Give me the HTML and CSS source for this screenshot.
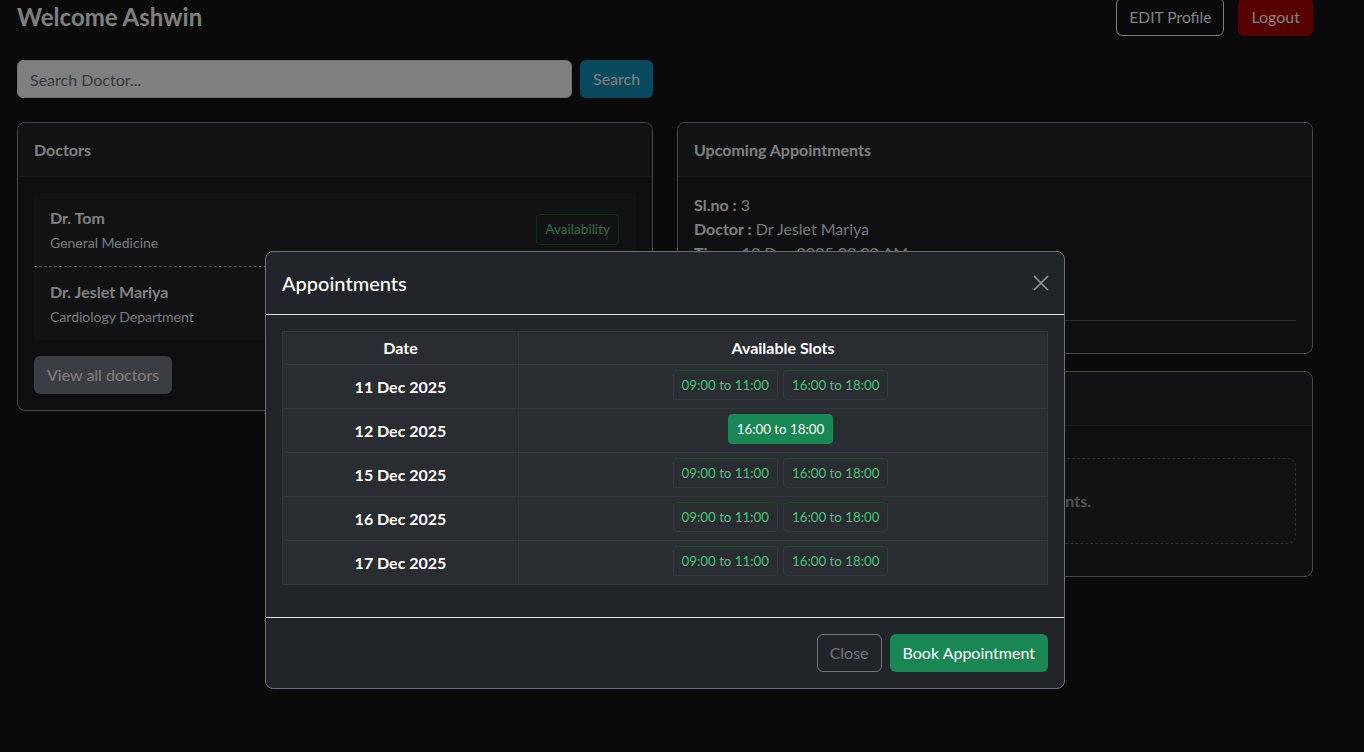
FILE: index.html
```html
<!DOCTYPE html>
<html lang="en">
<head>
    <meta charset="UTF-8">
    <meta name="viewport" content="width=device-width, initial-scale=1.0">
    <title>Patient Dashboard</title>
    <link rel="stylesheet" href="styles.css">
</head>
<body>
    <div class="page">
        <div class="topbar">
            <h3 class="welcome">Welcome Ashwin</h3>
            <div class="top-actions">
                <button class="btn btn-outline-light">EDIT Profile</button>
                <button class="btn btn-logout">Logout</button>
            </div>
        </div>

        <form class="search-row">
            <input type="text" class="search-input" placeholder="Search Doctor...">
            <button type="button" class="btn btn-search">Search</button>
        </form>

        <div class="columns">
            <div class="card">
                <div class="card-header">Doctors</div>
                <div class="card-body">
                    <ul class="doctor-list">
                        <li class="doctor-item">
                            <div>
                                <div class="doctor-name">Dr. Tom</div>
                                <div class="doctor-dept">General Medicine</div>
                            </div>
                            <button class="btn btn-sm btn-avail">Availability</button>
                        </li>
                        <li class="doctor-item">
                            <div>
                                <div class="doctor-name">Dr. Jeslet Mariya</div>
                                <div class="doctor-dept">Cardiology Department</div>
                            </div>
                            <button class="btn btn-sm btn-avail">Availability</button>
                        </li>
                    </ul>
                    <button class="btn btn-secondary">View all doctors</button>
                </div>
            </div>

            <div class="right-col">
                <div class="card">
                    <div class="card-header">Upcoming Appointments</div>
                    <div class="card-body">
                        <div class="appt">
                            <strong>Sl.no :</strong> 3<br>
                            <strong>Doctor :</strong> Dr Jeslet Mariya<br>
                            <strong>Time :</strong> 12 Dec 2025 09:00 AM<br>
                            <strong>Status :</strong> Booked
                        </div>
                        <hr>
                    </div>
                </div>

                <div class="card">
                    <div class="card-header">Past Appointments</div>
                    <div class="card-body">
                        <div class="empty-box">No previous appointments.</div>
                    </div>
                </div>
            </div>
        </div>
    </div>

    <div class="backdrop"></div>

    <div class="modal">
        <div class="modal-header">
            <h5 class="modal-title">Appointments</h5>
            <button class="btn-close" aria-label="Close">
                <svg width="16" height="16" viewBox="0 0 16 16">
                    <path d="M1 1L15 15M15 1L1 15" stroke="#8d9094" stroke-width="1.7" fill="none"/>
                </svg>
            </button>
        </div>
        <div class="modal-body">
            <table class="slots-table">
                <thead>
                    <tr>
                        <th class="date-col">Date</th>
                        <th>Available Slots</th>
                    </tr>
                </thead>
                <tbody>
                    <tr>
                        <td class="date">11 Dec 2025</td>
                        <td class="slots"><div class="slot-list">
                            <button class="btn btn-slot">09:00 to 11:00</button>
                            <button class="btn btn-slot">16:00 to 18:00</button>
                        </div></td>
                    </tr>
                    <tr>
                        <td class="date">12 Dec 2025</td>
                        <td class="slots"><div class="slot-list">
                            <button class="btn btn-slot active">16:00 to 18:00</button>
                        </div></td>
                    </tr>
                    <tr>
                        <td class="date">15 Dec 2025</td>
                        <td class="slots"><div class="slot-list">
                            <button class="btn btn-slot">09:00 to 11:00</button>
                            <button class="btn btn-slot">16:00 to 18:00</button>
                        </div></td>
                    </tr>
                    <tr>
                        <td class="date">16 Dec 2025</td>
                        <td class="slots"><div class="slot-list">
                            <button class="btn btn-slot">09:00 to 11:00</button>
                            <button class="btn btn-slot">16:00 to 18:00</button>
                        </div></td>
                    </tr>
                    <tr>
                        <td class="date">17 Dec 2025</td>
                        <td class="slots"><div class="slot-list">
                            <button class="btn btn-slot">09:00 to 11:00</button>
                            <button class="btn btn-slot">16:00 to 18:00</button>
                        </div></td>
                    </tr>
                </tbody>
            </table>
        </div>
        <div class="modal-footer">
            <button class="btn btn-outline-secondary">Close</button>
            <button class="btn btn-success">Book Appointment</button>
        </div>
    </div>
</body>
</html>
```

FILE: styles.css
```css
* { box-sizing: border-box; }
body {
    margin: 0;
    background: #141414;
    color: #fff;
    font-family: "Segoe UI", Lato, "Noto Sans", sans-serif;
    font-size: 16px;
    line-height: 1.5;
    overflow: hidden;
}
.page {
    width: 1296px;
    margin-left: 17px;
}
.topbar {
    display: flex;
    justify-content: space-between;
    align-items: center;
    margin-top: -2px;
    height: 38px;
}
.welcome {
    margin: 0;
    font-size: 24px;
    font-weight: 700;
    line-height: 1.2;
}
.top-actions {
    display: flex;
    gap: 14px;
}
.btn {
    font-family: inherit;
    font-size: 16px;
    line-height: 24px;
    padding: 6px 12px;
    border: 1px solid transparent;
    border-radius: 6px;
    color: #fff;
    background: none;
    cursor: pointer;
}
.btn-sm {
    font-size: 13.6px;
    line-height: 21px;
    padding: 4px 8px;
    border-radius: 4px;
}
.btn-outline-light { border-color: #f8f9fa; font-size: 15.6px; }
.btn-logout { background: #ad0000; }
.btn-search { background: #1393bb; }
.btn-secondary { background: #747b83; }
.btn-avail { color: #58d88a; border-color: #245a38; }
.btn-outline-secondary { color: #6c757d; border-color: #6c757d; }
.btn-success { background: #198754; }

.search-row {
    display: flex;
    gap: 8px;
    margin: 24px 0 0;
}
.search-input {
    width: 555px;
    height: 38px;
    padding: 6px 12px;
    font-family: inherit;
    font-size: 16px;
    background: #fff;
    border: 1px solid #dee2e6;
    border-radius: 6px;
}
.search-input::placeholder { color: #6c757d; }

.columns {
    display: grid;
    grid-template-columns: 1fr 1fr;
    gap: 24px;
    align-items: start;
    margin-top: 24px;
}
.right-col {
    display: flex;
    flex-direction: column;
    gap: 17px;
}
.card {
    background: #1c1e21;
    border: 1px solid #8a8f94;
    border-radius: 8px;
    overflow: hidden;
}
.card-header {
    padding: 16px;
    line-height: 21px;
    font-weight: 700;
    background: #222428;
    border-bottom: 1px solid #34373a;
}
.card-body { padding: 16px; }

.doctor-list {
    list-style: none;
    margin: 0 0 16px;
    padding: 0;
    background: #222428;
}
.doctor-item {
    display: flex;
    justify-content: space-between;
    align-items: center;
    padding: 13px 17px 13px 16px;
}
.doctor-item + .doctor-item { border-top: 1px dashed #9a9da0; }
.doctor-name {
    font-weight: 700;
    line-height: 24px;
    margin-bottom: 2px;
}
.doctor-dept {
    font-size: 14px;
    line-height: 21px;
    color: #eceef0;
}

.appt {
    padding-bottom: 15px;
    line-height: 24px;
    color: #e6e8ea;
}
.appt strong { color: #fff; }
hr {
    border: 0;
    border-top: 1px solid #55585c;
    margin: 16px 0;
}
.empty-box {
    margin: 16px 0;
    padding: 30px;
    line-height: 24px;
    text-align: center;
    font-weight: 700;
    color: #a0a4a9;
    background: #222428;
    border: 1px dashed #56595e;
    border-radius: 8px;
}

.backdrop {
    position: fixed;
    inset: 0;
    background: rgba(0, 0, 0, 0.5);
}
.modal {
    position: fixed;
    top: 251px;
    left: 265px;
    width: 800px;
    background: #212529;
    border: 1px solid #6c7075;
    border-radius: 8px;
}
.modal-header {
    display: flex;
    justify-content: space-between;
    align-items: center;
    padding: 16px;
    border-bottom: 1px solid #dee2e6;
}
.modal-title {
    margin: 0;
    font-size: 20px;
    font-weight: 500;
    line-height: 30px;
}
.btn-close {
    display: flex;
    padding: 0;
    margin-right: -1px;
    border: 0;
    background: none;
    cursor: pointer;
}
.modal-body { padding: 16px; }
.slots-table {
    width: 100%;
    table-layout: fixed;
    border-collapse: collapse;
    background: #292c31;
    margin-bottom: 16px;
}
.slots-table th,
.slots-table td {
    border: 1px solid #33373c;
    text-align: center;
}
.slots-table th {
    padding: 4px;
    line-height: 24px;
}
.date-col { width: 236px; }
.slots-table td.date {
    font-weight: 700;
    vertical-align: middle;
}
.slots-table td.slots { padding: 5px 4px 8px; }
.slot-list {
    display: flex;
    justify-content: center;
}
.btn-slot {
    font-size: 13.3px;
    line-height: 20px;
    padding: 4px 8px;
    margin-right: 5px;
    border-radius: 4px;
    color: #45c675;
    border-color: #1f4530;
}
.btn-slot.active {
    background: #198754;
    border-color: #198754;
    color: #fff;
}
.modal-footer {
    display: flex;
    justify-content: flex-end;
    gap: 8px;
    padding: 16px;
    border-top: 1px solid #dee2e6;
}
```
